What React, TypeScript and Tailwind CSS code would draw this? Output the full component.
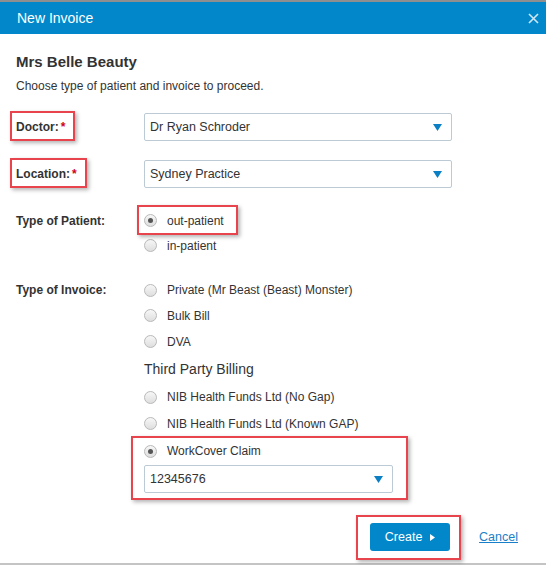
import { ReactNode } from 'react'

const Radio = ({ checked = false }: { checked?: boolean }) => (
  <span className="w-[13px] h-[13px] rounded-full border border-[#b9b9b9] bg-gradient-to-b from-[#f7f7f7] to-[#dedede] flex items-center justify-center shrink-0">
    {checked && <span className="w-[5px] h-[5px] rounded-full bg-[#555]" />}
  </span>
)

const RadioRow = ({ label, checked, h = 'h-[25px]' }: { label: string; checked?: boolean; h?: string }) => (
  <div className={`flex items-center gap-[10px] ${h}`}>
    <Radio checked={checked} />
    <span>{label}</span>
  </div>
)

const Select = ({ value, w = 'w-[308px]' }: { value: string; w?: string }) => (
  <div className={`${w} h-[28px] border border-[#bccad6] rounded-[2px] bg-white flex items-center justify-between pl-[5px] pr-[9px]`}>
    <span className="text-[12.5px]">{value}</span>
    <svg width="9" height="7" viewBox="0 0 9 7">
      <path d="M0 0 H9 L4.5 7 Z" fill="#0a7fc4" />
    </svg>
  </div>
)

// red annotation frame drawn over the content
const Mark = ({ children, box, className = '' }: { children: ReactNode; box: string; className?: string }) => (
  <div className={`relative ${className}`}>
    {children}
    <span className={`absolute border-2 border-[#e8444e] shadow-[2px_2px_4px_rgba(0,0,0,0.3)] pointer-events-none ${box}`} />
  </div>
)

const Label = ({ text, req }: { text: string; req?: boolean }) => (
  <span className="font-bold text-[#333]">
    {text}
    {req && <span className="text-[#d0021b] ml-[2px]">*</span>}
  </span>
)

export default function App() {
  return (
    <div className="w-[546px] h-[565px] bg-white border-t-2 border-b-2 border-t-[#8f8f8f] border-b-[#c4c4c4] flex flex-col text-[12px] text-[#333] font-['Liberation_Sans',Arial,sans-serif]">
      <div className="h-[32px] bg-[#0288ca] flex items-center justify-between pl-[17px] pr-[6px] shrink-0">
        <span className="text-white text-[14px]">New Invoice</span>
        <svg width="11" height="11" viewBox="0 0 11 11" className="mr-[1px]">
          <path d="M1 1 L10 10 M10 1 L1 10" stroke="#cfe7f6" strokeWidth="1.6" />
        </svg>
      </div>

      <div className="pl-[16px] flex-1 flex flex-col">
        <h2 className="text-[15px] font-bold mt-[19px] leading-[18px]">Mrs Belle Beauty</h2>
        <p className="mt-[8px] leading-[14px]">Choose type of patient and invoice to proceed.</p>

        <div className="grid grid-cols-[128px_1fr] mt-[20px]">
          <div className="flex items-center h-[28px]">
            <Mark box="-left-[6px] -right-[10px] -top-[7px] -bottom-[5px]">
              <Label text="Doctor:" req />
            </Mark>
          </div>
          <Select value="Dr Ryan Schroder" />

          <div className="flex items-center h-[28px] mt-[19px]">
            <Mark box="-left-[6px] -right-[10px] -top-[7px] -bottom-[5px]">
              <Label text="Location:" req />
            </Mark>
          </div>
          <div className="mt-[19px]">
            <Select value="Sydney Practice" />
          </div>

          <div className="flex items-center h-[25px] mt-[20px]">
            <Label text="Type of Patient:" />
          </div>
          <div className="mt-[20px] flex flex-col items-start">
            <Mark box="-left-[7px] -right-[14px] -top-[3px] -bottom-[2px]">
              <RadioRow label="out-patient" checked />
            </Mark>
            <RadioRow label="in-patient" />
          </div>

          <div className="flex items-center h-[26px] mt-[19px]">
            <Label text="Type of Invoice:" />
          </div>
          <div className="mt-[19px] flex flex-col">
            <RadioRow label="Private (Mr Beast (Beast) Monster)" h="h-[26px]" />
            <RadioRow label="Bulk Bill" />
            <RadioRow label="DVA" h="h-[27px]" />
            <div className="h-[29px] flex items-center text-[14px]">Third Party Billing</div>
            <RadioRow label="NIB Health Funds Ltd (No Gap)" h="h-[26px]" />
            <RadioRow label="NIB Health Funds Ltd (Known GAP)" h="h-[27px]" />
            <Mark box="-left-[13px] -right-[15px] -top-[2px] -bottom-[7px]" className="self-start mt-[1px]">
              <RadioRow label="WorkCover Claim" checked h="h-[26px]" />
              <div className="mt-[1px]">
                <Select value="12345676" w="w-[249px]" />
              </div>
            </Mark>
          </div>
        </div>

        <div className="flex items-center justify-end mt-[30px] pr-[28px]">
          <Mark box="-left-[14px] -right-[11px] -top-[8px] -bottom-[9px]">
            <button className="w-[80px] h-[28px] rounded-[3px] bg-[#0288ca] text-white text-[12.5px] flex items-center justify-center gap-[8px]">
              Create
              <svg width="5" height="7" viewBox="0 0 5 7">
                <path d="M0 0 L5 3.5 L0 7 Z" fill="#fff" />
              </svg>
            </button>
          </Mark>
          <a className="ml-[29px] text-[#1a7fc9] underline text-[12.5px]">Cancel</a>
        </div>
      </div>
    </div>
  )
}
